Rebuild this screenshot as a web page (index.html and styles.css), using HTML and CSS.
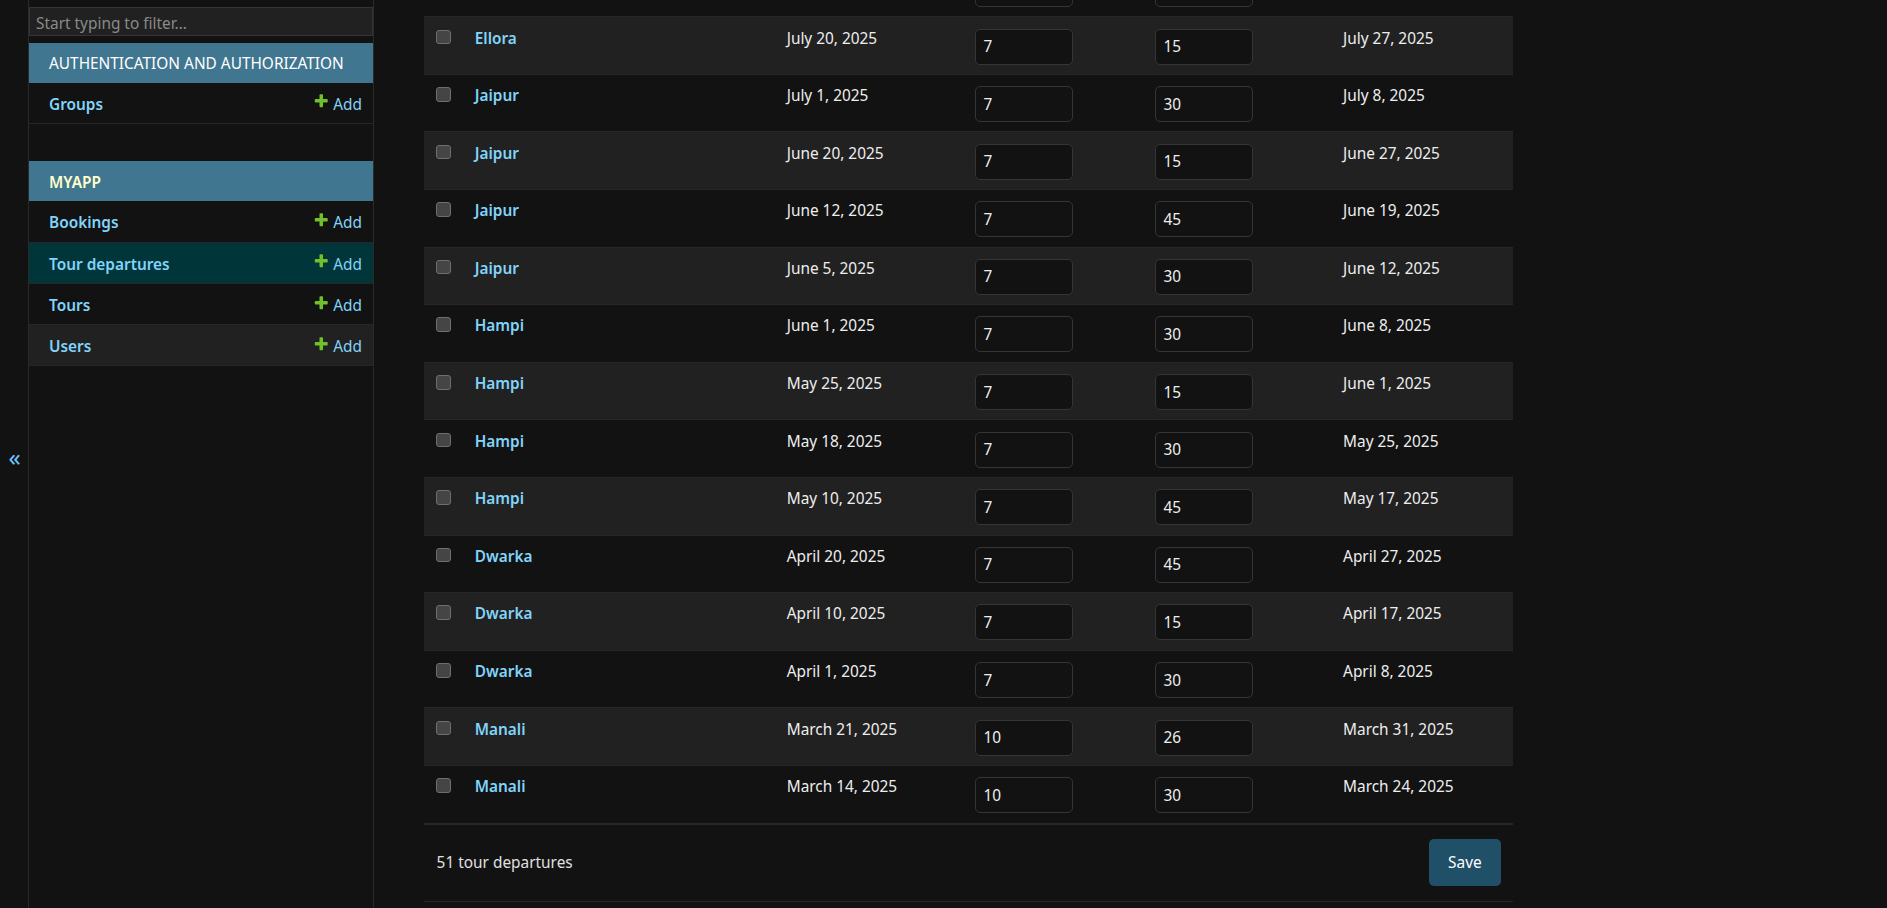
FILE: index.html
```html
<!DOCTYPE html>
<html lang="en">
<head>
<meta charset="utf-8">
<title>Select tour departure to change</title>
<link rel="stylesheet" href="styles.css">
</head>
<body>
<div class="page">
  <button class="toggle" type="button" aria-label="Toggle navigation">«</button>
  <nav class="sidebar">
    <input class="nav-filter" type="search" placeholder="Start typing to filter...">
    <div class="module">
      <div class="caption">AUTHENTICATION AND AUTHORIZATION</div>
      <div class="model">
        <a class="model-name" href="#">Groups</a>
        <a class="addlink" href="#"><svg viewBox="0 0 1792 1792"><path fill="#70bf2b" d="M1600 736v192q0 40-28 68t-68 28h-416v416q0 40-28 68t-68 28h-192q-40 0-68-28t-28-68v-416h-416q-40 0-68-28t-28-68v-192q0-40 28-68t68-28h416v-416q0-40 28-68t68-28h192q40 0 68 28t28 68v416h416q40 0 68 28t28 68z"/></svg>Add</a>
      </div>
    </div>
    <div class="module current">
      <div class="caption">MYAPP</div>
      <div class="model">
        <a class="model-name" href="#">Bookings</a>
        <a class="addlink" href="#"><svg viewBox="0 0 1792 1792"><path fill="#70bf2b" d="M1600 736v192q0 40-28 68t-68 28h-416v416q0 40-28 68t-68 28h-192q-40 0-68-28t-28-68v-416h-416q-40 0-68-28t-28-68v-192q0-40 28-68t68-28h416v-416q0-40 28-68t68-28h192q40 0 68 28t28 68v416h416q40 0 68 28t28 68z"/></svg>Add</a>
      </div>
      <div class="model selected">
        <a class="model-name" href="#">Tour departures</a>
        <a class="addlink" href="#"><svg viewBox="0 0 1792 1792"><path fill="#70bf2b" d="M1600 736v192q0 40-28 68t-68 28h-416v416q0 40-28 68t-68 28h-192q-40 0-68-28t-28-68v-416h-416q-40 0-68-28t-28-68v-192q0-40 28-68t68-28h416v-416q0-40 28-68t68-28h192q40 0 68 28t28 68v416h416q40 0 68 28t28 68z"/></svg>Add</a>
      </div>
      <div class="model">
        <a class="model-name" href="#">Tours</a>
        <a class="addlink" href="#"><svg viewBox="0 0 1792 1792"><path fill="#70bf2b" d="M1600 736v192q0 40-28 68t-68 28h-416v416q0 40-28 68t-68 28h-192q-40 0-68-28t-28-68v-416h-416q-40 0-68-28t-28-68v-192q0-40 28-68t68-28h416v-416q0-40 28-68t68-28h192q40 0 68 28t28 68v416h416q40 0 68 28t28 68z"/></svg>Add</a>
      </div>
      <div class="model hovered">
        <a class="model-name" href="#">Users</a>
        <a class="addlink" href="#"><svg viewBox="0 0 1792 1792"><path fill="#70bf2b" d="M1600 736v192q0 40-28 68t-68 28h-416v416q0 40-28 68t-68 28h-192q-40 0-68-28t-28-68v-416h-416q-40 0-68-28t-28-68v-192q0-40 28-68t68-28h416v-416q0-40 28-68t68-28h192q40 0 68 28t28 68v416h416q40 0 68 28t28 68z"/></svg>Add</a>
      </div>
    </div>
  </nav>
  <main class="main">
    <div class="changelist">
      <table class="result-list">
        <colgroup>
          <col class="c-check"><col class="c-name"><col class="c-date"><col class="c-num1"><col class="c-num2"><col class="c-end">
        </colgroup>
        <tbody>
          <tr><td><input class="cb" type="checkbox"></td><td><a class="name" href="#">Ellora</a></td><td>July 27, 2025</td><td><input class="num" value="7"></td><td><input class="num" value="30"></td><td>August 3, 2025</td></tr>
          <tr class="alt"><td><input class="cb" type="checkbox"></td><td><a class="name" href="#">Ellora</a></td><td>July 20, 2025</td><td><input class="num" value="7"></td><td><input class="num" value="15"></td><td>July 27, 2025</td></tr>
          <tr><td><input class="cb" type="checkbox"></td><td><a class="name" href="#">Jaipur</a></td><td>July 1, 2025</td><td><input class="num" value="7"></td><td><input class="num" value="30"></td><td>July 8, 2025</td></tr>
          <tr class="alt"><td><input class="cb" type="checkbox"></td><td><a class="name" href="#">Jaipur</a></td><td>June 20, 2025</td><td><input class="num" value="7"></td><td><input class="num" value="15"></td><td>June 27, 2025</td></tr>
          <tr><td><input class="cb" type="checkbox"></td><td><a class="name" href="#">Jaipur</a></td><td>June 12, 2025</td><td><input class="num" value="7"></td><td><input class="num" value="45"></td><td>June 19, 2025</td></tr>
          <tr class="alt"><td><input class="cb" type="checkbox"></td><td><a class="name" href="#">Jaipur</a></td><td>June 5, 2025</td><td><input class="num" value="7"></td><td><input class="num" value="30"></td><td>June 12, 2025</td></tr>
          <tr><td><input class="cb" type="checkbox"></td><td><a class="name" href="#">Hampi</a></td><td>June 1, 2025</td><td><input class="num" value="7"></td><td><input class="num" value="30"></td><td>June 8, 2025</td></tr>
          <tr class="alt"><td><input class="cb" type="checkbox"></td><td><a class="name" href="#">Hampi</a></td><td>May 25, 2025</td><td><input class="num" value="7"></td><td><input class="num" value="15"></td><td>June 1, 2025</td></tr>
          <tr><td><input class="cb" type="checkbox"></td><td><a class="name" href="#">Hampi</a></td><td>May 18, 2025</td><td><input class="num" value="7"></td><td><input class="num" value="30"></td><td>May 25, 2025</td></tr>
          <tr class="alt"><td><input class="cb" type="checkbox"></td><td><a class="name" href="#">Hampi</a></td><td>May 10, 2025</td><td><input class="num" value="7"></td><td><input class="num" value="45"></td><td>May 17, 2025</td></tr>
          <tr><td><input class="cb" type="checkbox"></td><td><a class="name" href="#">Dwarka</a></td><td>April 20, 2025</td><td><input class="num" value="7"></td><td><input class="num" value="45"></td><td>April 27, 2025</td></tr>
          <tr class="alt"><td><input class="cb" type="checkbox"></td><td><a class="name" href="#">Dwarka</a></td><td>April 10, 2025</td><td><input class="num" value="7"></td><td><input class="num" value="15"></td><td>April 17, 2025</td></tr>
          <tr><td><input class="cb" type="checkbox"></td><td><a class="name" href="#">Dwarka</a></td><td>April 1, 2025</td><td><input class="num" value="7"></td><td><input class="num" value="30"></td><td>April 8, 2025</td></tr>
          <tr class="alt"><td><input class="cb" type="checkbox"></td><td><a class="name" href="#">Manali</a></td><td>March 21, 2025</td><td><input class="num" value="10"></td><td><input class="num" value="26"></td><td>March 31, 2025</td></tr>
          <tr><td><input class="cb" type="checkbox"></td><td><a class="name" href="#">Manali</a></td><td>March 14, 2025</td><td><input class="num" value="10"></td><td><input class="num" value="30"></td><td>March 24, 2025</td></tr>
        </tbody>
      </table>
      <div class="paginator">
        <span class="count">51 tour departures</span>
        <button class="save" type="button">Save</button>
      </div>
    </div>
  </main>
</div>
</body>
</html>
```
FILE: styles.css
```css
* { box-sizing: border-box; }

html, body {
  margin: 0;
  height: 100%;
}

body {
  background: #121212;
  color: #eeeeee;
  font-family: "Noto Sans", "Open Sans", sans-serif;
  font-size: 15.4px;
  overflow: hidden;
}

.page {
  display: flex;
  height: 100vh;
}

.toggle {
  flex: 0 0 29px;
  border: 0;
  border-right: 1px solid #2a2a2a;
  background: #121212;
  color: #6cc4f7;
  font-family: "Noto Sans", sans-serif;
  font-size: 24px;
  line-height: 1;
  padding: 5px 0 0 1px;
  display: flex;
  align-items: center;
  justify-content: center;
}

.sidebar {
  flex: 0 0 345px;
  border-right: 1px solid #2a2a2a;
  padding-top: 7px;
}

.nav-filter {
  display: block;
  width: 100%;
  height: 28.5px;
  margin: 0 0 7px;
  padding: 4px 6px 0;
  background: #212121;
  border: 1px solid #353535;
  border-radius: 0;
  color: #eeeeee;
  font-family: inherit;
  font-size: 15.4px;
  outline: none;
}

.nav-filter::placeholder { color: #8a8a8a; }

.module { margin-bottom: 37.7px; }

.caption {
  height: 40px;
  background: #417690;
  color: #ffffff;
  padding: 2px 20px 0;
  display: flex;
  align-items: center;
}

.current .caption {
  color: #ffffcc;
  font-weight: 600;
}

.model {
  height: 41.2px;
  display: flex;
  align-items: center;
  justify-content: space-between;
  padding: 3px 11px 0 20px;
  border-bottom: 1px solid #272727;
}

.model.selected { background: #00363a; }
.model.hovered { background: #212121; }

.model-name {
  color: #81d4fa;
  font-weight: 600;
  text-decoration: none;
}

.addlink {
  display: flex;
  align-items: center;
  gap: 4px;
  color: #81d4fa;
  text-decoration: none;
}

.addlink svg {
  width: 16.5px;
  height: 16.5px;
  margin-bottom: 5px;
}

.main {
  flex: 1;
  min-width: 0;
  padding-left: 50px;
}

.changelist {
  width: 1089px;
  margin-top: -40.4px;
}

.result-list {
  width: 100%;
  border-collapse: collapse;
  table-layout: fixed;
}

.c-check { width: 38.7px; }
.c-name { width: 312px; }
.c-date { width: 188.7px; }
.c-num1 { width: 180px; }
.c-num2 { width: 187.7px; }
.c-end { width: 181.9px; }

.result-list td {
  padding: 11.3px 12px 9.3px;
  border-bottom: 1px solid #272727;
  vertical-align: top;
  line-height: 19px;
  white-space: nowrap;
}

.result-list tr.alt td { background: #212121; }

.cb {
  appearance: none;
  -webkit-appearance: none;
  display: block;
  width: 14.5px;
  height: 14.5px;
  margin: 1px 0 0;
  border: 1px solid #6e6e6e;
  border-radius: 3px;
  background: #454545;
}

.name {
  color: #81d4fa;
  font-weight: 600;
  text-decoration: none;
}

.num {
  display: block;
  width: 97.5px;
  height: 36px;
  margin: 0;
  padding: 0 7px;
  background: #121212;
  border: 1px solid #353535;
  border-radius: 5px;
  color: #eeeeee;
  font-family: inherit;
  font-size: 15.4px;
  outline: none;
}

.paginator {
  display: flex;
  justify-content: space-between;
  align-items: center;
  padding: 14.6px 12.3px 15.3px 12.6px;
  border-top: 1px solid #272727;
  border-bottom: 1px solid #272727;
  color: #e0e0e0;
}

.save {
  height: 46.7px;
  padding: 0 19px;
  background: #205067;
  color: #ffffff;
  border: 0;
  border-radius: 5px;
  font-family: inherit;
  font-size: 15.4px;
}
```
